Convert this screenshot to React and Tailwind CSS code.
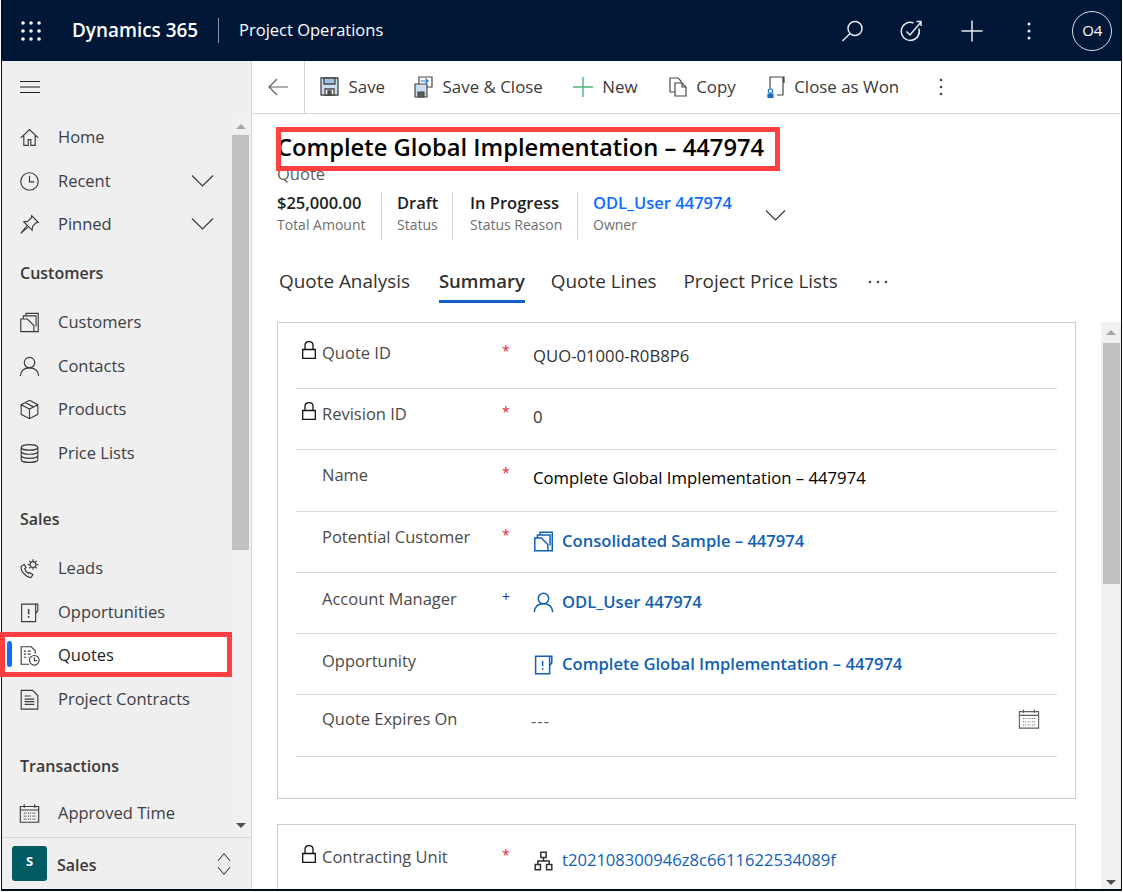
import React from 'react';

const font = 'font-["Open_Sans","Noto_Sans",sans-serif]';

// thin outline icon wrapper, all glyphs are drawn on a 24 box
function Ico({ size = 24, className = 'text-[#3b3a39]', children, sw = 1.3 }) {
  return (
    <svg width={size} height={size} viewBox="0 0 24 24" fill="none" stroke="currentColor" strokeWidth={sw} className={`shrink-0 ${className}`}>
      {children}
    </svg>
  );
}

const icons = {
  home: <path d="M2 12.500 12 3l10 9.500M5.500 9.500v11.500h5v-6.500h3V21h5V9.500" />,
  clock: <><circle cx="12" cy="12" r="10" /><path d="M12 5.500v7h5.500" /></>,
  pin: <path d="m14.500 2 7.500 7.500-2.500.5-4 4-.5 4.500-4-4L2 22l7.500-9-4-4 4.500-.5 4-4z" />,
  customers: <path d="M2 22.500h20V1.500H8v3H5V8H2zM2 8h7.500l7.500 7.500v7M5 4.500h14.500v12" />,
  contact: <><circle cx="12" cy="7.500" r="6" /><path d="M1.500 23c.5-6 4.500-9.500 10.500-9.500S22 17 22.500 23" /></>,
  product: <path d="M12 1.500 21.500 6.500v11L12 22.500l-9.500-5v-11zM2.500 6.500l9.500 5 9.500-5M12 11.500v11M7 4l9.500 5" />,
  stack: <><ellipse cx="12" cy="5" rx="9.500" ry="3.200" /><path d="M2.500 5v14c0 1.800 4.300 3.200 9.500 3.200s9.500-1.400 9.500-3.200V5M2.500 9.700c0 1.800 4.300 3.200 9.500 3.200s9.500-1.400 9.500-3.200M2.500 14.400c0 1.800 4.300 3.200 9.500 3.200s9.500-1.400 9.500-3.200" /></>,
  leads: <><path d="M6 7.500 2.500 9.500c-1 5 5 12.500 11 13l2.500-3.500-4-2.500-1.500 1c-2-1-3.500-3.500-4-5.500l1.500-1z" /><circle cx="16" cy="7.500" r="3.300" /><path d="M16 1.500v2M16 11.500v2M10 7.500h2M20 7.500h2M11.800 3.300l1.400 1.400M18.800 10.300l1.400 1.400M20.200 3.300l-1.400 1.400M13.200 10.300l-1.400 1.400" /></>,
  opp: <><path d="M19 2.500H3v20h16V11" /><path d="M19 2.500h2.500v7.500L20 12l-1-2z" /><path d="M11 8v6M11 16v2" strokeWidth="1.700" /></>,
  quote: <><path d="M11.500 22H2.500V2H14l4.500 4.500v3.500" /><path d="M5.500 7h2.500M10 7h3.500M5.500 10.500h2.500M10 10.500h3.500M5.500 14h2.500M10 14h1" /><circle cx="17.500" cy="17.500" r="5.500" /><path d="M17.500 14v3.800h3" /></>,
  contract: <path d="M2.500 23V1.500H15.500l6 6V23zM6.500 8h7M6.500 11.500h11M6.500 14.500h11M6.500 17.500h11" />,
  calendar: <><path d="M1.500 4h21v18h-21zM1.500 8h21M6 1.500v4M18 1.500v4" /><path d="M5.500 11.500h3M10.500 11.500h3M15.500 11.500h3M5.500 15h3M10.500 15h3M15.500 15h3M5.500 18.500h3M10.500 18.500h3M15.500 18.500h3" strokeDasharray="1 1" /></>,
  org: <path d="M9 2.500h6v6H9zM2.500 16.500h6v6h-6zM15.500 16.500h6v6h-6zM12 8.500v4M5.500 16.500v-4h13v4" />,
};

function Lock() {
  return (
    <svg width="14" height="18" viewBox="0 0 14 18" fill="none" stroke="#111" strokeWidth="1.300" className="-translate-y-[3px]">
      <path d="M.7 8.500h12.600v8.800H.7zM3 8.500V4.500C3 2 4.500.7 7 .7s4 1.300 4 3.800v4" />
    </svg>
  );
}

function Row({ icon, label, chevron, active }) {
  return (
    <div className={`relative flex h-[43.500px] items-center pl-[15px] ${active ? 'text-[#201f1e]' : 'text-[#3b4046]'}`}>
      {active && <div className="absolute left-[1px] top-[3px] h-[37px] w-[226px] bg-white" />}
      {active && <div className="absolute left-[5px] top-[7px] h-[26px] w-[5px] rounded-sm bg-[#0f6cff]" />}
      {active && <div className="absolute left-[-2px] top-[-2.500px] h-[45px] w-[232px] border-[5px] border-[#ff4040]" />}
      <span className="relative flex w-[24px] justify-center"><Ico size={21} sw={1.300}>{icons[icon]}</Ico></span>
      <span className="relative ml-[17px] text-[16.500px]">{label}</span>
      {chevron && (
        <svg width="23" height="13" viewBox="0 0 23 13" fill="none" stroke="#3b3a39" strokeWidth="1.200" className="absolute left-[189px] top-[14px]">
          <path d="M1 1.500 11.500 12 22 1.500" />
        </svg>
      )}
    </div>
  );
}

function Heading({ children, className }) {
  return <div className={`flex h-[43.500px] items-center pl-[18px] text-[16px] font-semibold text-[#3b3a39] ${className}`}>{children}</div>;
}

function Scroll({ className, top, thumb, bottom }) {
  return (
    <div className={`flex flex-col items-center bg-[#f0f0f0] ${className}`}>
      <div className={top}>
        <div className="h-0 w-0 border-x-[5px] border-b-[5px] border-x-transparent border-b-[#a6a6a6]" />
      </div>
      <div className={`w-[17px] bg-[#c0c0c0] ${thumb}`} />
      <div className={`mt-auto ${bottom}`}>
        <div className="h-0 w-0 border-x-[5px] border-t-[5px] border-x-transparent border-t-[#505050]" />
      </div>
    </div>
  );
}

function Sidebar() {
  return (
    <aside className="flex w-[250px] shrink-0 flex-col border-r border-[#d6d6d6] bg-[#efefef]">
      <div className="flex h-[52px] shrink-0 items-center pl-[18px]">
        <svg width="21" height="14" viewBox="0 0 21 14" stroke="#201f1e" strokeWidth="1"><path d="M0 1.500h20M0 7h20M0 12.500h20" /></svg>
      </div>
      <div className="flex h-[724px] shrink-0">
        <nav className="w-[229px] shrink-0 pt-[3px]">
          <Row icon="home" label="Home" />
          <Row icon="clock" label="Recent" chevron />
          <Row icon="pin" label="Pinned" chevron />
          <Heading className="mt-[5px] mb-[6px]">Customers</Heading>
          <Row icon="customers" label="Customers" />
          <Row icon="contact" label="Contacts" />
          <Row icon="product" label="Products" />
          <Row icon="stack" label="Price Lists" />
          <Heading className="mt-[22.500px] mb-[6px]">Sales</Heading>
          <Row icon="leads" label="Leads" />
          <Row icon="opp" label="Opportunities" />
          <Row icon="quote" label="Quotes" active />
          <Row icon="contract" label="Project Contracts" />
          <Heading className="mt-[23.500px] mb-[4px]">Transactions</Heading>
          <Row icon="calendar" label="Approved Time" />
        </nav>
        <Scroll className="w-[19px]" top="pt-[11px] pb-[6px]" thumb="h-[415px]" bottom="mb-[9px]" />
      </div>
      <div className="flex flex-1 items-center border-t border-[#d6d6d6] pl-[10px] pr-[20px]">
        <div className="flex h-[35px] w-[35px] items-center justify-center rounded-[3px] bg-[#005b62] pb-[4px] text-[13px] font-bold text-white">S</div>
        <span className="ml-[10px] mt-[3px] text-[16px] font-semibold text-[#3b3a39]">Sales</span>
        <svg width="14" height="26" viewBox="0 0 15 26" fill="none" stroke="#3b3a39" strokeWidth="1.100" className="ml-auto">
          <path d="M1 9.500 7.500 2 14 9.500M1 16.500 7.500 24 14 16.500" />
        </svg>
      </div>
    </aside>
  );
}

function TopBar() {
  return (
    <header className="flex h-[61px] shrink-0 items-center bg-[#001737] text-white">
      <svg width="20" height="20" viewBox="0 0 20 20" fill="white" className="ml-[19px]">
        {[2, 10, 18].map(y => [2, 10, 18].map(x => <circle key={`${x}-${y}`} cx={x} cy={y} r="1.800" />))}
      </svg>
      <span className="ml-[31px] text-[18.900px] font-semibold">Dynamics 365</span>
      <span className="ml-[20px] h-[25px] w-px bg-[#8a94a3]" />
      <span className="ml-[20px] text-[16.500px]">Project Operations</span>
      <svg width="24" height="24" viewBox="0 0 24 24" fill="none" stroke="#e8ecf2" strokeWidth="1.500" className="ml-[458px]">
        <circle cx="14" cy="9.500" r="7" /><path d="M9 14.500 1.500 22" />
      </svg>
      <svg width="24" height="24" viewBox="0 0 24 24" fill="none" stroke="#e8ecf2" strokeWidth="1.500" className="ml-[34px]">
        <path d="M19.800 9.500A9 9 0 1 1 14.500 4" /><path d="m7.500 12.500 3.500 3.500L22 3M17.500 2.500H22V7" />
      </svg>
      <svg width="24" height="24" viewBox="0 0 24 24" stroke="#e8ecf2" strokeWidth="1.500" className="ml-[37px]"><path d="M1.500 12h21M12 1.500v21" /></svg>
      <svg width="6" height="20" viewBox="0 0 6 20" fill="#e8ecf2" className="ml-[42px]"><circle cx="3" cy="3" r="1.500" /><circle cx="3" cy="10" r="1.500" /><circle cx="3" cy="17" r="1.500" /></svg>
      <div className="ml-[40px] flex h-[40px] w-[40px] items-center justify-center rounded-full border border-[#d8dde4] text-[15px]">O4</div>
    </header>
  );
}

function Cmd({ icon, label, className }) {
  return (
    <div className={`flex items-center ${className}`}>
      {icon}
      <span className="ml-[9.500px] text-[16.900px] text-[#3b3a39]">{label}</span>
    </div>
  );
}

function CommandBar() {
  return (
    <div className="flex h-[53px] shrink-0 items-center border-b border-[#d6d6d6]">
      <div className="flex h-full w-[53px] items-center justify-center border-r border-[#d6d6d6]">
        <svg width="20" height="18" viewBox="0 0 20 18" fill="none" stroke="#605e5c" strokeWidth="1.200"><path d="M9 1 1 9l8 8M1 9h19" /></svg>
      </div>
      <Cmd className="ml-[15px]" label="Save" icon={
        <svg width="19" height="19" viewBox="0 0 19 19" fill="#c9dff5" stroke="#484644" strokeWidth="1.300"><path d="M1 1h17v17H1z" /><path d="M4 1h11v6H4z" fill="#9cc3ea" /><path d="M5 18v-6h9v6z" fill="#fff" /><path d="M8 14h3v4H8z" fill="#605e5c" /></svg>
      } />
      <Cmd className="ml-[29px]" label="Save & Close" icon={
        <svg width="19" height="22" viewBox="0 0 19 22" fill="none" stroke="#484644" strokeWidth="1.200"><path d="M1 8h12v13H1z" fill="#c9dff5" /><path d="M4 16h6v5H4z" fill="#605e5c" /><path d="M5 8V1h13v10h-5" /><path d="M7 5h7M11.500 2.500 14 5l-2.500 2.500" stroke="#1a73c9" /></svg>
      } />
      <Cmd className="ml-[30px]" label="New" icon={
        <svg width="20" height="20" viewBox="0 0 20 20" stroke="#4fb477" strokeWidth="1.400"><path d="M0 10h20M10 0v20" /></svg>
      } />
      <Cmd className="ml-[31px]" label="Copy" icon={
        <svg width="18" height="20" viewBox="0 0 18 20" fill="none" stroke="#484644" strokeWidth="1.200"><path d="M1 1h8l3 3v11H1z" /><path d="M6 6h7l4 4v9H6z" fill="#fff" /><path d="M13 6v4h4" /></svg>
      } />
      <Cmd className="ml-[30px]" label="Close as Won" icon={
        <svg width="19" height="22" viewBox="0 0 19 22" fill="none" stroke="#484644" strokeWidth="1.200"><path d="M4 12V1h13v18h-6M14 1h4v6" /><circle cx="4.500" cy="15" r="2.200" stroke="#1a73c9" /><path d="M2 18h5v3.500H2z" fill="#1a73c9" stroke="#1a73c9" /></svg>
      } />
      <svg width="6" height="18" viewBox="0 0 6 18" fill="#484644" className="ml-[39px]"><circle cx="3" cy="2" r="1.300" /><circle cx="3" cy="9" r="1.300" /><circle cx="3" cy="16" r="1.300" /></svg>
    </div>
  );
}

function Stat({ value, label, className, link }) {
  return (
    <div className={`flex h-[48px] flex-col ${className}`}>
      <span className={`h-[23px] text-[16.500px] font-semibold leading-[21px] whitespace-nowrap ${link ? 'text-[#0f6cff]' : 'text-[#201f1e]'}`}>{value}</span>
      <span className="text-[14px] leading-[20px] text-[#6f6e6d] whitespace-nowrap">{label}</span>
    </div>
  );
}

function Field({ label, lock, req, h, labelPt, valuePt, children }) {
  return (
    <div className="flex border-b border-[#d9d9d9]" style={{ height: h }}>
      <div className={`flex w-[206px] shrink-0 items-center self-start ${labelPt}`}>
        <span className="flex w-[26px] pl-[6px]">{lock && <Lock />}</span>
        <span className="text-[16.500px] leading-[22px] text-[#4c4a48] whitespace-nowrap">{label}</span>
      </div>
      <div className={`w-[31px] shrink-0 ${labelPt}`}>
        {req && <span className={`block text-[14px] leading-[18px] ${req === '+' ? 'text-[#2222dd]' : 'text-[#e0244a]'}`}>{req}</span>}
      </div>
      <div className={`flex min-w-0 flex-1 items-center self-start leading-[24px] ${valuePt}`}>{children}</div>
    </div>
  );
}

function Lookup({ icon, children, iconClass = 'text-[#1160b7]', textClass = 'font-semibold' }) {
  return (
    <div className="flex items-center gap-[8px]">
      <Ico size={21} className={iconClass} sw={1.700}>{icons[icon]}</Ico>
      <span className={`text-[16.600px] text-[#1160b7] whitespace-nowrap ${textClass}`}>{children}</span>
    </div>
  );
}

function Form() {
  return (
    <div className="flex min-h-0 flex-1">
      <div className="ml-[25px] w-[799px] shrink-0 overflow-hidden">
        <section className="h-[477px] border border-[#cccccc] px-[18px]">
          <Field label="Quote ID" lock req="*" h={66} labelPt="pt-[19px]" valuePt="pt-[21px]"><span className="text-[16.700px] text-[#323130]">QUO-01000-R0B8P6</span></Field>
          <Field label="Revision ID" lock req="*" h={61} labelPt="pt-[14px]" valuePt="pt-[16px]"><span className="text-[16.700px] text-[#323130]">0</span></Field>
          <Field label="Name" req="*" h={62} labelPt="pt-[14px]" valuePt="pt-[16px]"><span className="text-[16.700px] text-black whitespace-nowrap">Complete Global Implementation – 447974</span></Field>
          <Field label="Potential Customer" req="*" h={61} labelPt="pt-[14px]" valuePt="pt-[17px]"><Lookup icon="customers">Consolidated Sample – 447974</Lookup></Field>
          <Field label="Account Manager" req="+" h={61} labelPt="pt-[15px]" valuePt="pt-[17px]"><Lookup icon="contact">ODL_User 447974</Lookup></Field>
          <Field label="Opportunity" h={61} labelPt="pt-[16px]" valuePt="pt-[18px]"><Lookup icon="opp">Complete Global Implementation – 447974</Lookup></Field>
          <Field label="Quote Expires On" h={62} labelPt="pt-[13px]" valuePt="pt-[14px]">
            <span className="-ml-[2px] text-[16.700px] tracking-[1px] text-[#605e5c]">---</span>
            <span className="ml-auto mr-[17px] -translate-y-[2px]"><Ico size={22} className="text-[#605e5c]" sw={1.200}>{icons.calendar}</Ico></span>
          </Field>
        </section>
        <section className="mt-[25px] h-[120px] border border-[#cccccc] px-[18px]">
          <div className="flex">
            <div className="flex w-[206px] shrink-0 items-center self-start pt-[21px]">
              <span className="flex w-[26px] pl-[6px]"><Lock /></span>
              <span className="text-[16.500px] leading-[22px] text-[#4c4a48] whitespace-nowrap">Contracting Unit</span>
            </div>
            <div className="w-[31px] shrink-0 pt-[21px]">
              <span className="block text-[14px] leading-[18px] text-[#e0244a]">*</span>
            </div>
            <div className="pt-[23px] leading-[24px]">
              <Lookup icon="org" iconClass="text-[#323130]" textClass="font-medium">t202108300946z8c6611622534089f</Lookup>
            </div>
          </div>
        </section>
      </div>
      <Scroll className="ml-[25px] w-[20px]" top="pt-[8px] pb-[8px]" thumb="h-[241px]" bottom="mb-[4px]" />
    </div>
  );
}

export default function App() {
  return (
    <div className={`h-[892px] w-[1123px] overflow-hidden bg-white ${font}`}>
      <div className="ml-px flex h-[891px] w-[1121px] flex-col border-x border-b-2 border-x-[#000c20] border-b-[#000c20] bg-white">
        <TopBar />
        <div className="flex min-h-0 flex-1">
          <Sidebar />
          <main className="flex min-w-0 flex-1 flex-col">
            <CommandBar />
            <div className="relative ml-[25px] mt-[16px] w-fit">
              <div className="absolute left-[-1px] top-[-3px] h-[44px] w-[504px] border-[5px] border-[#ff4040]" />
              <h1 className="h-[34px] text-[23.750px] font-[550] leading-[34px] text-black whitespace-nowrap">Complete Global Implementation – 447974</h1>
            </div>
            <div className="ml-[25px] h-[20px] text-[16.500px] leading-[20px] text-[#605e5c]">Quote</div>
            <div className="ml-[25px] mt-[8px] flex">
              <Stat value="$25,000.00" label="Total Amount" className="w-[105px] border-r border-[#d6d6d6]" />
              <Stat value="Draft" label="Status" className="w-[71px] border-r border-[#d6d6d6] pl-[15px]" />
              <Stat value="In Progress" label="Status Reason" className="w-[125px] border-r border-[#d6d6d6] pl-[17px]" />
              <Stat value="ODL_User 447974" label="Owner" link className="pl-[15px]" />
              <svg width="21" height="13" viewBox="0 0 21 13" fill="none" stroke="#3b3a39" strokeWidth="1.200" className="ml-[33px] mt-[17px]"><path d="M1 1.500 10.500 11 20 1.500" /></svg>
            </div>
            <div className="ml-[27px] mt-[23px] flex h-[59px] items-start text-[18.900px] text-[#323130]">
              <span className="mt-[4px]">Quote Analysis</span>
              <span className="ml-[29px] mt-[4px] h-[36px] border-b-[3px] border-[#0f5fc4] text-[18.500px] font-semibold">Summary</span>
              <span className="ml-[26px] mt-[4px]">Quote Lines</span>
              <span className="ml-[27px] mt-[4px]">Project Price Lists</span>
              <svg width="20" height="4" viewBox="0 0 20 4" fill="#3b3a39" className="ml-[30px] mt-[17px]"><circle cx="2" cy="2" r="1.200" /><circle cx="10" cy="2" r="1.200" /><circle cx="18" cy="2" r="1.200" /></svg>
            </div>
            <Form />
          </main>
        </div>
      </div>
    </div>
  );
}
